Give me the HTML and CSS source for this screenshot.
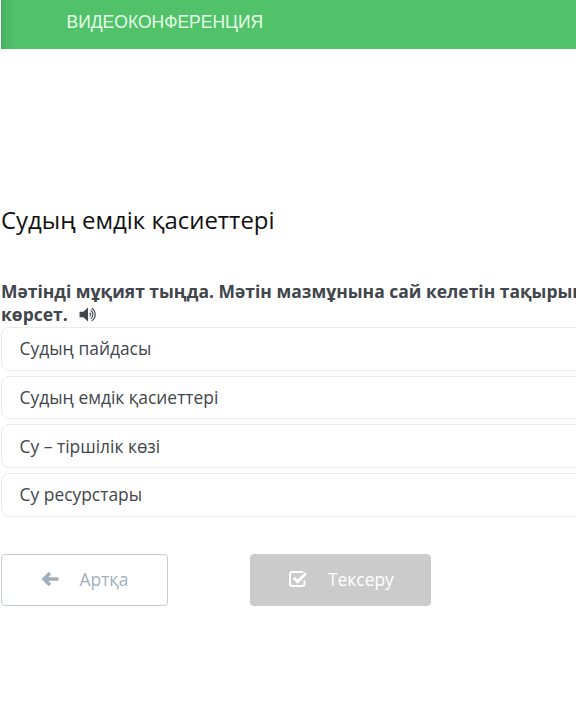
FILE: index.html
```html
<!DOCTYPE html>
<html lang="kk">
<head>
    <meta charset="UTF-8">
    <meta name="viewport" content="width=device-width, initial-scale=1.0">
    <title>Судың емдік қасиеттері</title>
    <link rel="stylesheet" href="styles.css">
</head>
<body>
    <header class="header">
        <span class="header__title">ВИДЕОКОНФЕРЕНЦИЯ</span>
    </header>
    <main class="lesson">
        <h1 class="lesson__title">Судың емдік қасиеттері</h1>
        <p class="question">
            Мәтінді мұқият тыңда. Мәтін мазмұнына сай келетін тақырыпты<br>
            көрсет.
            <svg class="question__sound" viewBox="0 0 18 16" aria-hidden="true">
                <path class="speaker" d="M0 5h4l5-4.5v15L4 11H0z"/>
                <path class="wave" d="M10.8 6a2.6 2.6 0 0 1 0 4M11.8 3.5a5.4 5.4 0 0 1 0 9M13 1.3a8 8 0 0 1 0 13.4"/>
            </svg>
        </p>
        <ul class="options">
            <li class="option">Судың пайдасы</li>
            <li class="option">Судың емдік қасиеттері</li>
            <li class="option">Су – тіршілік көзі</li>
            <li class="option">Су ресурстары</li>
        </ul>
        <div class="actions">
            <button class="btn btn--back" type="button">
                <svg class="btn__icon" viewBox="0 0 18 16" aria-hidden="true">
                    <path class="arrow" d="M17.5 8H3M9 2L3 8l6 6"/>
                </svg>
                <span>Артқа</span>
            </button>
            <button class="btn btn--check" type="button">
                <svg class="btn__icon" viewBox="0 0 19 18" aria-hidden="true">
                    <path class="box" d="M15.5 10.5v3.3a2.2 2.2 0 0 1-2.2 2.2H3.2A2.2 2.2 0 0 1 1 13.8V4.2A2.2 2.2 0 0 1 3.2 2h10.1q.6 0 1 .2"/>
                    <path class="tick" d="M4.7 7.8l3.8 3.8 8.5-8.3"/>
                </svg>
                <span>Тексеру</span>
            </button>
        </div>
    </main>
</body>
</html>
```

FILE: styles.css
```css
body {
  margin: 0;
  background: #fff;
  color: #40464b;
  font: 17.4px/23px "Open Sans", "Noto Sans", sans-serif;
  overflow-x: hidden;
}

.header {
  box-sizing: border-box;
  height: 49px;
  margin-left: 1px;
  padding: 11px 0 0 65.5px;
  background: linear-gradient(to right, #46a95e 0, #4db866 5px, #51c26a 14px);
  color: #e3fbe6;
  font: 17.5px/22px "Liberation Sans", Arial, sans-serif;
}

.lesson {
  box-sizing: border-box;
  width: 100%;
  padding: 154px 0 0 1px;
}

.lesson__title {
  margin: 0;
  color: #111;
  font-size: 23.95px;
  font-weight: 400;
  line-height: 34px;
}

.question {
  margin: 43px 0 0;
  font-size: 17.48px;
  font-weight: 700;
  white-space: nowrap;
}

.question__sound {
  width: 18px;
  height: 15px;
  margin-left: 7px;
  vertical-align: -1px;
}

.speaker {
  fill: #40464b;
}

.wave {
  fill: none;
  stroke: #40464b;
  stroke-width: 1.2;
}

.options {
  display: flex;
  flex-direction: column;
  gap: 4.8px;
  margin: 1px -10px 0 0;
  padding: 0;
  list-style: none;
}

.option {
  box-sizing: border-box;
  height: 43.8px;
  padding: 9.4px 17.6px;
  border: 1px solid #ebebeb;
  border-radius: 8px;
}

.actions {
  display: flex;
  gap: 82px;
  margin-top: 37px;
}

.btn {
  display: flex;
  align-items: center;
  box-sizing: border-box;
  height: 52.5px;
  padding: 0 0 1px 38.5px;
  border: 1px solid #c5cccf;
  border-radius: 4px;
  background: #fff;
  color: #9fb0bb;
  font: inherit;
}

.btn--back {
  width: 167px;
  gap: 21px;
}

.btn--check {
  width: 181px;
  gap: 20px;
  padding-left: 38px;
  border-color: #cbcbcb;
  background: #cbcbcb;
  color: #fff;
}

.btn__icon {
  width: 18px;
  height: 16px;
  fill: none;
  stroke: currentColor;
}

.btn--check .btn__icon {
  width: 19px;
  height: 18px;
}

.arrow {
  stroke-width: 3.6;
}

.box {
  stroke-width: 2;
}

.tick {
  stroke-width: 3;
}
```
